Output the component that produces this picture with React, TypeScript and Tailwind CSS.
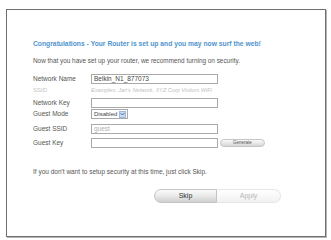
export default function App() {
  const label = 'w-[58px] shrink-0 text-[6.5px] text-[#555]';
  const input = 'w-[127px] h-[10px] border border-[#a9a9a9] bg-white px-[2px] flex items-center text-[6.5px] text-[#444]';

  return (
    <div className="w-[331px] h-[240px] bg-white pt-[9px] pl-[6px]" style={{ fontFamily: '"Liberation Sans", Arial, sans-serif' }}>
      <div className="w-[320px] h-[228px] border border-[#6f6f6f] shadow-[1px_1px_0_#b5b5b5] pl-[26px] pt-[29px] flex flex-col">
        {/* Heading */}
        <div className="h-[10px] flex items-center text-[6.75px] font-bold text-[#4f94cd]">
          Congratulations - Your Router is set up and you may now surf the web!
        </div>
        <div className="mt-[7px] h-[10px] flex items-center text-[6.4px] text-[#555]">
          Now that you have set up your router, we recommend turning on security.
        </div>

        {/* Form rows */}
        <div className="mt-[8px] h-[10px] flex items-center">
          <span className={label}>Network Name</span>
          <div className={input}>Belkin_N1_877073</div>
        </div>
        <div className="mt-[1px] h-[10px] flex items-center">
          <span className="w-[58px] shrink-0 text-[6px] text-[#c4c4c4]">SSID</span>
          <span className="text-[5.5px] italic text-[#c0c0c0]">Examples: Jan's Network, XYZ Corp Visitors WiFi</span>
        </div>
        <div className="mt-[3px] h-[10px] flex items-center">
          <span className={label}>Network Key</span>
          <div className={input}></div>
        </div>
        <div className="mt-[1px] h-[10px] flex items-center">
          <span className={label}>Guest Mode</span>
          <div className="w-[37px] h-[10px] border border-[#a9a9a9] bg-white flex items-center justify-between pl-[2px] pr-[1px] text-[6px] text-[#444]">
            Disabled
            <span className="w-[7px] h-[7px] bg-[#c9d9f0] border border-[#9fb6d9] flex items-center justify-center">
              <svg width="5" height="4" viewBox="0 0 5 4"><path d="M0.5 1 L2.5 3 L4.5 1" fill="none" stroke="#4a6fa5" strokeWidth="1" /></svg>
            </span>
          </div>
        </div>
        <div className="mt-[5px] h-[10px] flex items-center">
          <span className={label}>Guest SSID</span>
          <div className={input + ' !text-[#b0b0b0]'}>guest</div>
        </div>
        <div className="mt-[4px] h-[10px] flex items-center">
          <span className={label}>Guest Key</span>
          <div className={input}></div>
          <button className="ml-[2px] w-[45px] h-[8px] rounded-full border border-[#c5c5c5] bg-gradient-to-b from-[#fafafa] to-[#d6d6d6] flex items-center justify-center text-[4.5px] text-[#555]">
            Generate
          </button>
        </div>

        <div className="mt-[19px] h-[10px] flex items-center text-[6.5px] text-[#555]">
          If you don't want to setup security at this time, just click Skip.
        </div>

        {/* Buttons */}
        <div className="mt-[12px] ml-[121px] flex">
          <button className="w-[63px] h-[14px] rounded-l-full border border-[#c4c4c4] bg-gradient-to-b from-[#fbfbfb] via-[#e9e9e9] to-[#cfcfcf] flex items-center justify-center text-[7px] text-[#333]">
            Skip
          </button>
          <button className="w-[64px] h-[14px] rounded-r-full border border-l-0 border-[#e6e6e6] bg-gradient-to-b from-[#ffffff] to-[#f1f1f1] flex items-center justify-center text-[7px] text-[#b5b5b5]">
            Apply
          </button>
        </div>
      </div>
    </div>
  );
}
